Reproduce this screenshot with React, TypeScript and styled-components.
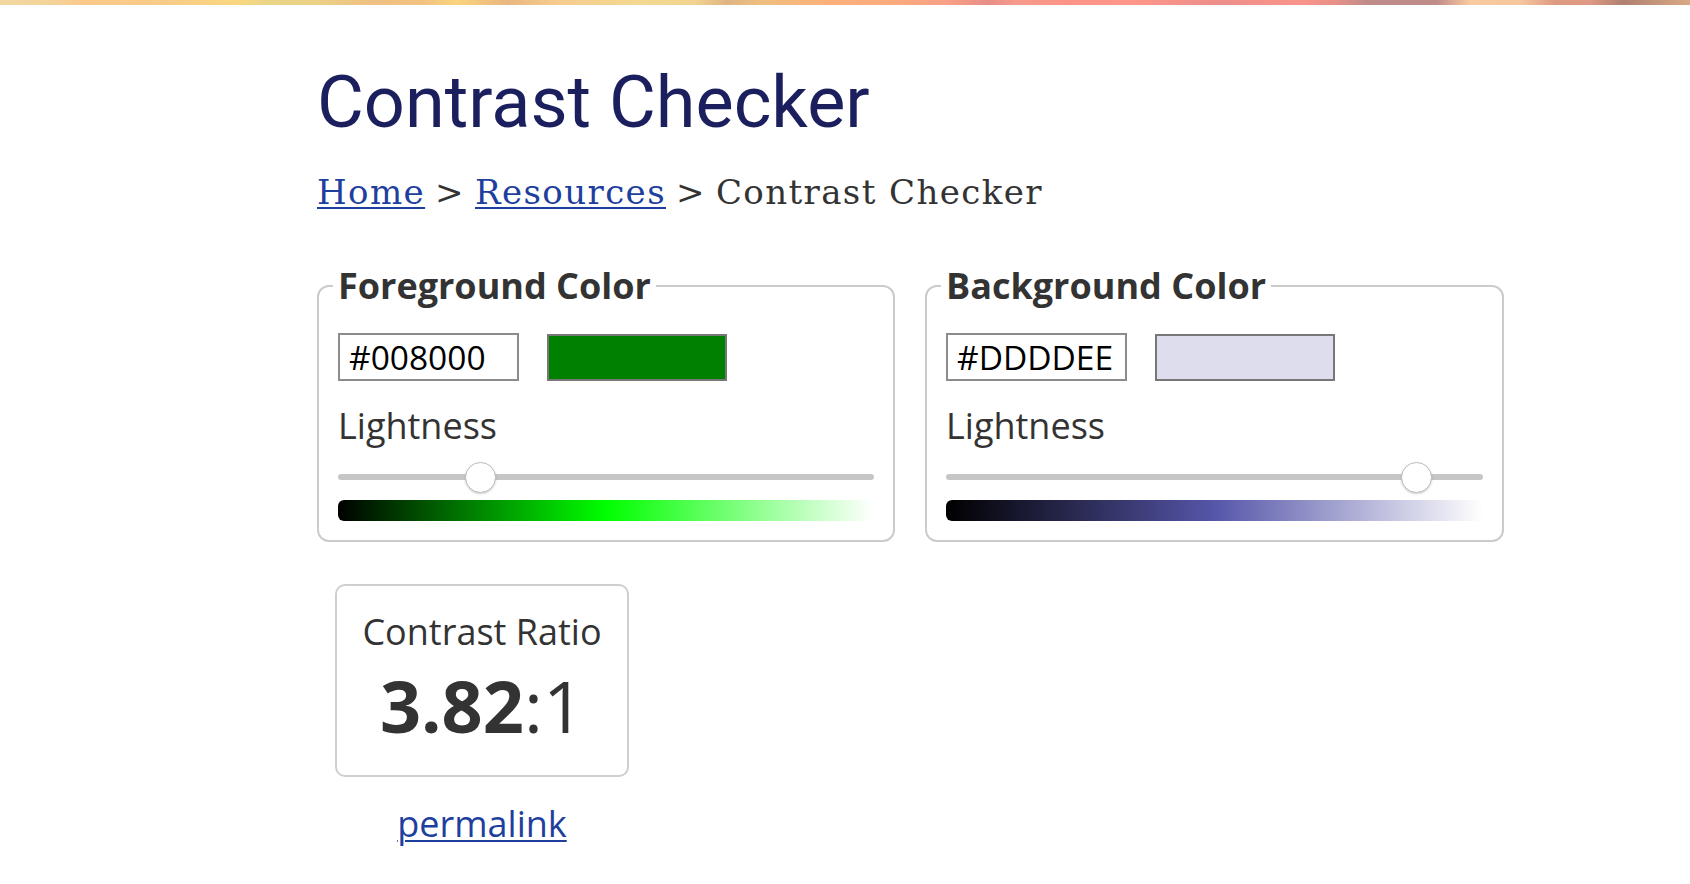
import React from "react";
import styled, { createGlobalStyle } from "styled-components";

const GlobalStyle = createGlobalStyle`
  html, body { margin: 0; padding: 0; background: #fff; }
  body { font-family: "Open Sans", "Noto Sans", sans-serif; color: #333; }
`;

const TopBar = styled.div`
  height: 5px;
  background: linear-gradient(90deg,
    #f2d8a0 0%, #f4d39a 3%, #fbc98b 5%, #f8cc88 10%, #fbd780 14%, #e9d487 16%, #ecd085 19%,
    #eec083 22%, #f2c282 25%, #fbd47d 27%, #e9b680 30%, #f6cc8e 33%, #f4d892 38%, #f2d490 41%,
    #e0b482 43%, #eebf80 45%, #fdb07b 49%, #fbaa7d 53%, #f9a087 56%, #e88e87 58.5%, #f69a8c 60%,
    #fb9487 63%, #fe968a 67%, #ec8e89 72%, #fa9489 77%, #e69088 79%, #bf8b8a 81%, #c08c8a 85%,
    #f9cba0 87%, #f6c69c 90%, #de9983 92%, #e09a84 94%, #b08070 96%, #d9a985 100%);
`;

const Page = styled.main`
  padding: 0 0 40px 317px;
  width: 1188px;
`;

const Title = styled.h1`
  margin: 62px 0 0 0;
  font-family: Roboto, "Liberation Sans", sans-serif;
  font-weight: 400;
  font-size: 72px;
  line-height: 72px;
  color: #1b1f5e;
`;

const Crumbs = styled.nav`
  margin-top: 36px;
  font-family: "DejaVu Serif", "Liberation Serif", serif;
  font-size: 34px;
  line-height: 34px;
  letter-spacing: 1.4px;
  color: #333;
  white-space: nowrap;
`;

const CrumbLink = styled.a`
  color: #1e3f9e;
  text-decoration: underline;
  text-decoration-thickness: 2px;
  text-underline-offset: 3px;
`;

const Sep = styled.span`
  margin: 0 10px;
`;

const Panels = styled.div`
  display: grid;
  grid-template-columns: 578px 579px;
  column-gap: 30px;
  margin-top: 52px;
`;

const Panel = styled.fieldset`
  margin: 0;
  min-width: 0;
  border: 2px solid #cbcbcb;
  border-radius: 12px;
  padding: 0 19px 19px 19px;
`;

const Legend = styled.legend`
  font-weight: 700;
  font-size: 36px;
  line-height: normal;
  color: #333;
  padding: 0 5px;
  margin-left: -5px;
`;

const InputRow = styled.div`
  display: flex;
  align-items: center;
  gap: 28px;
  margin-top: 23px;
`;

const HexInput = styled.input`
  box-sizing: border-box;
  width: 181px;
  height: 48px;
  border: 2px solid #8c8c8c;
  border-radius: 0;
  padding: 0 9px;
  font-family: "Open Sans", sans-serif;
  font-size: 33.5px;
  color: #000;
  background: #fff;
  outline: none;
`;

const Swatch = styled.div<{ $color: string }>`
  box-sizing: border-box;
  width: 180px;
  height: 47px;
  border: 2px solid #777;
  background: ${(p) => p.$color};
`;

const Label = styled.label`
  display: block;
  margin-top: 20px;
  font-size: 36px;
  line-height: normal;
  color: #333;
`;

const Range = styled.input`
  -webkit-appearance: none;
  appearance: none;
  display: block;
  width: 100%;
  height: 31px;
  margin: 11px 0 0 0;
  padding: 0;
  background: transparent;
  &::-webkit-slider-runnable-track {
    height: 6px;
    border-radius: 3px;
    background: #c6c6c6;
  }
  &::-webkit-slider-thumb {
    -webkit-appearance: none;
    appearance: none;
    box-sizing: border-box;
    width: 31px;
    height: 31px;
    margin-top: -12px;
    border-radius: 50%;
    border: 1px solid #bdbdbd;
    background: #fff;
    box-shadow: 0 1px 2px rgba(0, 0, 0, 0.18);
  }
`;

const GradientBar = styled.div<{ $stops: string }>`
  margin-top: 8px;
  height: 21px;
  border-radius: 6px;
  background: linear-gradient(90deg, ${(p) => p.$stops});
`;

const ResultColumn = styled.div`
  display: flex;
  flex-direction: column;
  align-items: center;
  width: 294px;
  margin: 42px 0 0 18px;
`;

const ResultBox = styled.section`
  box-sizing: border-box;
  width: 294px;
  border: 2px solid #cfcfcf;
  border-radius: 10px;
  padding: 21px 10px 21px;
  text-align: center;
`;

const ResultLabel = styled.div`
  font-size: 36px;
  line-height: 49px;
  color: #333;
`;

const Ratio = styled.div`
  font-size: 72px;
  line-height: 98px;
  color: #333;
`;

const Strong = styled.b`
  font-weight: 700;
`;

const Permalink = styled.a`
  margin-top: 22px;
  font-size: 36px;
  line-height: 49px;
  color: #1e3f9e;
  text-decoration: underline;
  text-decoration-thickness: 2px;
  text-underline-offset: 3px;
`;

type ColorPanelProps = {
  title: string;
  hex: string;
  lightness: number;
  stops: string;
};

const ColorPanel = ({ title, hex, lightness, stops }: ColorPanelProps) => (
  <Panel>
    <Legend>{title}</Legend>
    <InputRow>
      <HexInput defaultValue={hex} aria-label={`${title} hex`} />
      <Swatch $color={hex} />
    </InputRow>
    <Label>Lightness</Label>
    <Range type="range" min={0} max={100} step={0.1} defaultValue={lightness} />
    <GradientBar $stops={stops} />
  </Panel>
);

export default function App() {
  return (
    <>
      <GlobalStyle />
      <TopBar />
      <Page>
        <Title>Contrast Checker</Title>
        <Crumbs>
          <CrumbLink href="#">Home</CrumbLink>
          <Sep>&gt;</Sep>
          <CrumbLink href="#">Resources</CrumbLink>
          <Sep>&gt;</Sep>
          Contrast Checker
        </Crumbs>
        <Panels>
          <ColorPanel
            title="Foreground Color"
            hex="#008000"
            lightness={25.1}
            stops="#000 0%, hsl(120,100%,25%) 25%, hsl(120,100%,50%) 50%, hsl(120,100%,75%) 75%, #fff 100%"
          />
          <ColorPanel
            title="Background Color"
            hex="#DDDDEE"
            lightness={90}
            stops="#000 0%, hsl(240,33%,25%) 25%, hsl(240,33%,50%) 50%, hsl(240,33%,75%) 75%, #fff 100%"
          />
        </Panels>
        <ResultColumn>
          <ResultBox>
            <ResultLabel>Contrast Ratio</ResultLabel>
            <Ratio>
              <Strong>3.82</Strong>:1
            </Ratio>
          </ResultBox>
          <Permalink href="#">permalink</Permalink>
        </ResultColumn>
      </Page>
    </>
  );
}
